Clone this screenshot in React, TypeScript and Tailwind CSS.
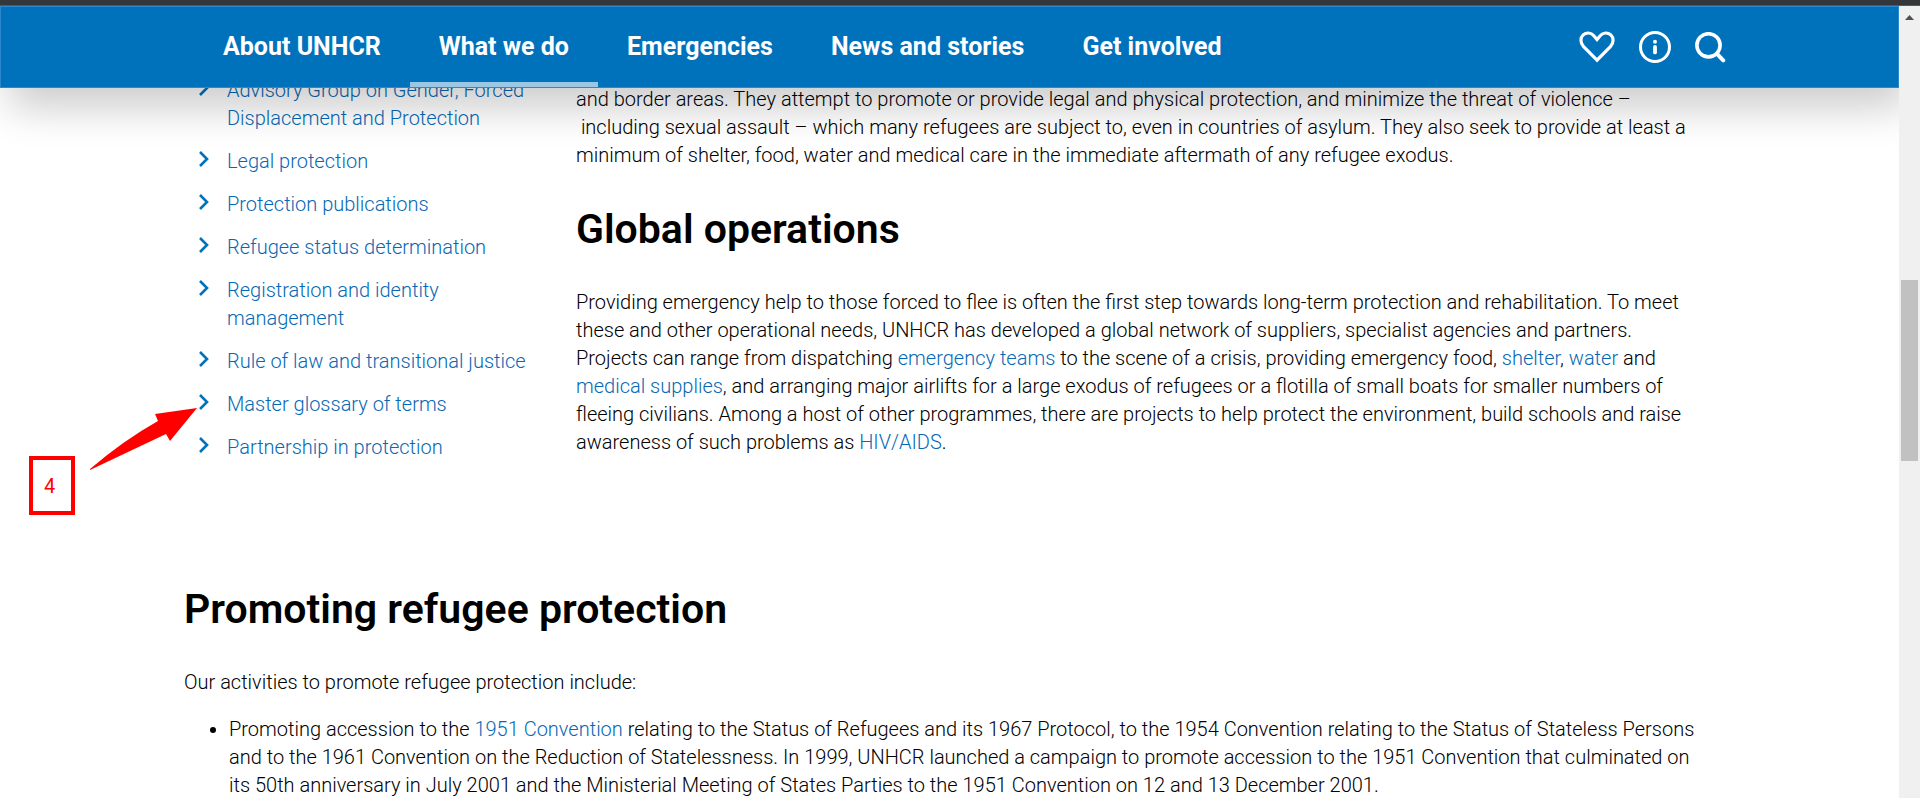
import type { ReactNode } from "react";

const navItems = [
  { label: "About UNHCR", active: false },
  { label: "What we do", active: true },
  { label: "Emergencies", active: false },
  { label: "News and stories", active: false },
  { label: "Get involved", active: false },
];

const sideLinks = [
  "Advisory Group on Gender, Forced Displacement and Protection",
  "Legal protection",
  "Protection publications",
  "Refugee status determination",
  "Registration and identity management",
  "Rule of law and transitional justice",
  "Master glossary of terms",
  "Partnership in protection",
];

function TextLink({ children }: { children: ReactNode }) {
  return (
    <a href="#" className="text-[#0768b3]">
      {children}
    </a>
  );
}

function HeartIcon() {
  return (
    <svg className="h-8 w-9" viewBox="0 0 36 32" fill="none" stroke="currentColor" strokeWidth="3.2" strokeLinejoin="miter">
      <path d="M18 29.2 L4.6 15.6 C1 11.6 1.2 6.6 4.2 3.9 C7.2 1.2 12 1.3 14.6 4.6 L18 8.6 L21.4 4.6 C24 1.3 28.8 1.2 31.8 3.9 C34.8 6.6 35 11.6 31.4 15.6 Z" />
    </svg>
  );
}

function InfoIcon() {
  return (
    <svg className="h-8 w-8" viewBox="0 0 32 32" fill="none" stroke="currentColor">
      <circle cx="16" cy="16" r="14.5" strokeWidth="3" />
      <circle cx="16" cy="10.7" r="2" fill="currentColor" stroke="none" />
      <path d="M16 16v5.4" strokeWidth="3.8" strokeLinecap="round" />
    </svg>
  );
}

function SearchIcon() {
  return (
    <svg className="h-[31px] w-[31px]" viewBox="0 0 31 31" fill="none" stroke="currentColor">
      <circle cx="13.5" cy="13.3" r="11.6" strokeWidth="3.6" />
      <path d="M21.8 21.6 L28.2 28.4" strokeWidth="4" strokeLinecap="round" />
    </svg>
  );
}

function Header() {
  return (
    <header className="relative z-10 border border-[#2b88cb] bg-[#0072bc] text-white shadow-[9px_20px_40px_rgba(0,0,0,0.2)]">
      <div className="mx-auto flex h-20 max-w-[1553px] items-stretch justify-between pl-[21px]">
        <nav className="flex">
          {navItems.map((item) => (
            <a
              key={item.label}
              href="#"
              className={
                item.active
                  ? "flex items-center border-y-[5px] border-t-transparent border-b-[#99c7e4] px-[29px] text-[25px] font-bold whitespace-nowrap"
                  : "flex items-center border-y-[5px] border-transparent px-[29px] text-[25px] font-bold whitespace-nowrap"
              }
            >
              {item.label}
            </a>
          ))}
        </nav>
        <div className="flex items-center gap-6">
          <button type="button" aria-label="Donate">
            <HeartIcon />
          </button>
          <button type="button" aria-label="Information">
            <InfoIcon />
          </button>
          <button type="button" aria-label="Search">
            <SearchIcon />
          </button>
        </div>
      </div>
    </header>
  );
}

function Sidebar() {
  return (
    <ul className="flex w-[350px] shrink-0 flex-col gap-[15px] pl-[15px]">
      {sideLinks.map((label) => (
        <li key={label} className="flex items-start gap-[18px]">
          <svg className="mt-1 h-4 w-[10px] shrink-0" viewBox="0 0 10 16" fill="none" stroke="#0072bc" strokeWidth="2.6">
            <path d="M1 1 L8 8 L1 15" />
          </svg>
          <TextLink>{label}</TextLink>
        </li>
      ))}
    </ul>
  );
}

function Scrollbar() {
  return (
    <div className="flex w-[21px] shrink-0 flex-col items-center bg-[#f0f0f0]">
      <svg className="mt-[9px] h-[5px] w-[9px]" viewBox="0 0 9 5" fill="#505050">
        <path d="M4.5 0 L9 5 H0 Z" />
      </svg>
      <div className="mt-[260px] h-[181px] w-[17px] bg-[#c1c1c1]" />
    </div>
  );
}

function Callout() {
  return (
    <>
      <div className="absolute top-[456px] left-[29px] z-20 flex h-[59px] w-[46px] items-center border-4 border-[#ff0000] pl-[11px] text-xl text-[#ff0000]">
        4
      </div>
      <svg className="absolute top-[406px] left-[88px] z-20 h-[66px] w-[112px]" viewBox="88 406 112 66" fill="#ff0000">
        <path d="M90 469 Q124 440 158 421 L155 414 L197 408 L170 441 L166 434 Q128 452 90 470 Z" />
      </svg>
    </>
  );
}

export default function App() {
  return (
    <div className="relative flex h-screen flex-col overflow-hidden bg-white font-['Roboto',sans-serif] text-black">
      <div className="h-[6px] shrink-0 border-b border-[#5a5560] bg-[#35363a]" />
      <div className="flex min-h-0 flex-1">
        <div className="min-w-0 flex-1 overflow-hidden">
          <Header />
          <main className="mx-auto -mt-3 max-w-[1531px] text-xl leading-7 [font-weight:350]">
            <div className="flex gap-[42px]">
              <Sidebar />
              <article className="max-w-[1132px] min-w-0 flex-1 pt-[9px]">
                <p>
                  and border areas. They attempt to promote or provide legal and physical protection, and minimize the threat
                  of violence – {"\u00a0"}including sexual assault – which many refugees are subject to, even in countries of
                  asylum. They also seek to provide at least a minimum of shelter, food, water and medical care in the
                  immediate aftermath of any refugee exodus.
                </p>
                <h2 className="mt-9 text-[41px] leading-[48px] font-semibold">Global operations</h2>
                <p className="mt-[35px]">
                  Providing emergency help to those forced to flee is often the first step towards long-term protection and
                  rehabilitation. To meet these and other operational needs, UNHCR has developed a global network of
                  suppliers, specialist agencies and partners. Projects can range from dispatching{" "}
                  <TextLink>emergency teams</TextLink> to the scene of a crisis, providing emergency food,{" "}
                  <TextLink>shelter</TextLink>, <TextLink>water</TextLink> and <TextLink>medical supplies</TextLink>, and
                  arranging major airlifts for a large exodus of refugees or a flotilla of small boats for smaller numbers of
                  fleeing civilians. Among a host of other programmes, there are projects to help protect the environment,
                  build schools and raise awareness of such problems as <TextLink>HIV/AIDS</TextLink>.
                </p>
              </article>
            </div>
            <section className="mt-[124px]">
              <h2 className="text-[41px] leading-[48px] font-semibold">Promoting refugee protection</h2>
              <p className="mt-[35px]">Our activities to promote refugee protection include:</p>
              <ul className="mt-[19px] list-disc pl-[45px]">
                <li>
                  Promoting accession to the <TextLink>1951 Convention</TextLink> relating to the Status of Refugees and its
                  1967 Protocol, to the 1954 Convention relating to the Status of Stateless Persons and to the 1961
                  Convention on the Reduction of Statelessness. In 1999, UNHCR launched a campaign to promote accession to
                  the 1951 Convention that culminated on its 50th anniversary in July 2001 and the Ministerial Meeting of
                  States Parties to the 1951 Convention on 12 and 13 December 2001.
                </li>
              </ul>
            </section>
          </main>
        </div>
        <Scrollbar />
      </div>
      <Callout />
    </div>
  );
}
